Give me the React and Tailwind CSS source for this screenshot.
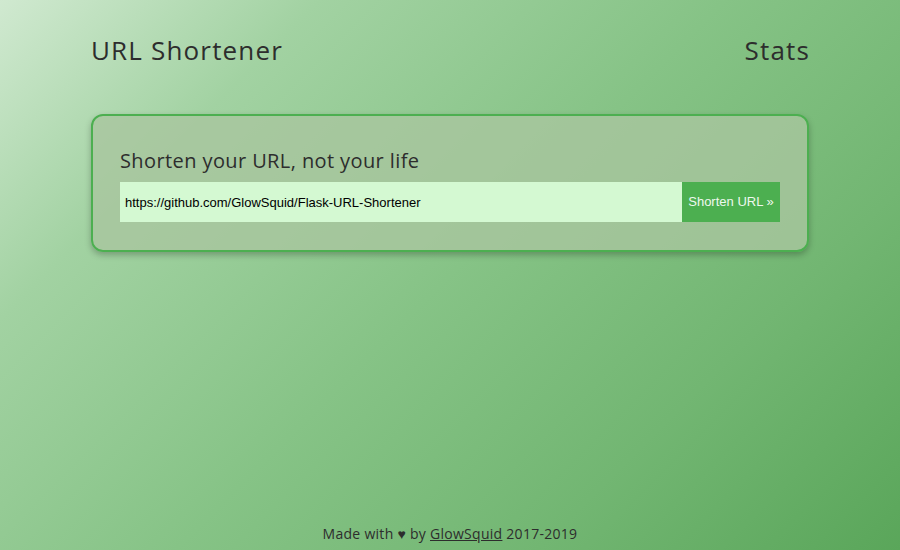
import React, { useState } from 'react';

export default function App() {
  const [url, setUrl] = useState('https://github.com/GlowSquid/Flask-URL-Shortener');

  return (
    <div className="h-[550px] w-full flex flex-col bg-[linear-gradient(135deg,#d0e9d0_0%,#a2d2a2_22%,#86c386_50%,#72b672_75%,#5aa65a_100%)] text-[#2d2d2d] font-['Open_Sans','Lato',sans-serif]">
      {/* Header */}
      <header className="flex items-center justify-between px-[91px] pt-[33px]">
        <h1 className="text-[26px] leading-[34px] tracking-[0.045em]">URL Shortener</h1>
        <a className="text-[26px] leading-[34px] tracking-[0.045em] -mr-[1px]">Stats</a>
      </header>

      {/* Form card */}
      <main className="px-[91px] mt-[47px]">
        <div className="rounded-xl border-2 border-[#4caf50] bg-[#a9c69f]/80 shadow-[0_3px_6px_rgba(0,0,0,0.25)] px-[27px] pt-[31px] pb-[28px]">
          <h2 className="text-[20px] leading-[28px] tracking-[0.02em] mb-[7px]">Shorten your URL, not your life</h2>
          <form className="flex" onSubmit={(e) => e.preventDefault()}>
            <input
              value={url}
              onChange={(e) => setUrl(e.target.value)}
              className="flex-1 h-[40px] bg-[#d4f9d2] px-[5px] text-[13px] text-black outline-none font-['Liberation_Sans',Arial,sans-serif]"
            />
            <button className="w-[98px] h-[40px] bg-[#4caf50] text-[13px] text-[#eef8ee] font-['Liberation_Sans',Arial,sans-serif]">
              Shorten URL »
            </button>
          </form>
        </div>
      </main>

      {/* Footer */}
      <footer className="mt-auto pb-[6px] text-center text-[14px] leading-[20px] tracking-[0.02em]">
        Made with ♥ by <a className="underline">GlowSquid</a> 2017-2019
      </footer>
    </div>
  );
}
